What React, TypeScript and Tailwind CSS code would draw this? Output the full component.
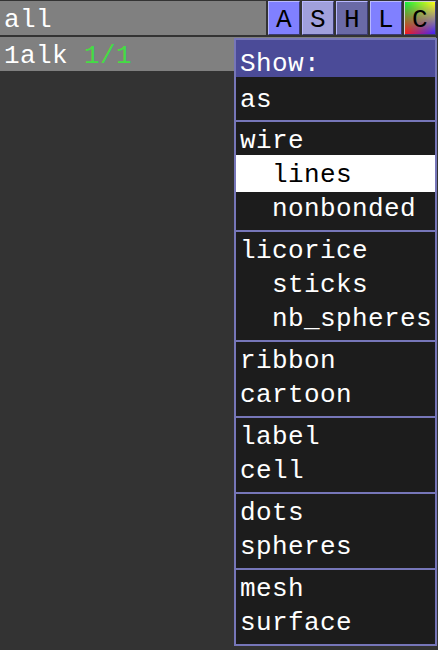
import React from "react";

type Item = { label: string; indent?: boolean; active?: boolean };

const groups: Item[][] = [
  [{ label: "wire" }, { label: "lines", indent: true, active: true }, { label: "nonbonded", indent: true }],
  [{ label: "licorice" }, { label: "sticks", indent: true }, { label: "nb_spheres", indent: true }],
  [{ label: "ribbon" }, { label: "cartoon" }],
  [{ label: "label" }, { label: "cell" }],
  [{ label: "dots" }, { label: "spheres" }],
  [{ label: "mesh" }, { label: "surface" }],
];

function Btn({ letter, bg }: { letter: string; bg: string }) {
  return (
    <div
      className={`${bg} w-[32px] h-[34px] border border-t-[#b8b8ff] border-l-[#b8b8ff] border-r-[#3c3c70] border-b-[#3c3c70] flex justify-center text-black leading-[34px] pt-px`}
    >
      {letter}
    </div>
  );
}

export default function App() {
  return (
    <div className="relative w-[438px] h-[650px] overflow-hidden bg-[#333333] font-['Liberation_Mono',monospace] text-[26px] tracking-[0.4px] text-white">
      {/* TOP ROW */}
      <div className="flex gap-[2px] w-[436px] pt-px">
        <div className="flex-1 h-[34px] bg-[#808080] pl-[4px] pt-[2px] leading-[34px] overflow-hidden">all</div>
        <Btn letter="A" bg="bg-[#8080ff]" />
        <Btn letter="S" bg="bg-[#a0a0dc]" />
        <Btn letter="H" bg="bg-[#6a6aa6]" />
        <Btn letter="L" bg="bg-[#8080ff]" />
        <div className="relative w-[32px] h-[34px] border border-t-[#d0d0d0] border-l-[#d0d0d0] border-r-[#3c3c70] border-b-[#3c3c70] bg-[linear-gradient(to_right,#ff1818,#4020ff)] flex justify-center text-black leading-[34px] pt-px">
          <div className="absolute inset-0 bg-[linear-gradient(to_right,#10f040,#ffff10)] [mask-image:linear-gradient(to_bottom,black,transparent)]" />
          <span className="relative">C</span>
        </div>
      </div>

      {/* OBJECT ROW */}
      <div className="mt-[2px] w-[436px] h-[34px] bg-[#808080] pl-[4px] pt-[2px] leading-[34px] overflow-hidden">
        1alk <span className="text-[#44dd44]">1/1</span>
      </div>

      {/* SHOW MENU */}
      <div className="absolute left-[234px] top-[38px] w-[203px] border-2 border-[#7676b8] bg-[#1c1c1c]">
        <div className="h-[37px] bg-[#4b4b98] pl-[4px] pt-[7px] leading-[34px]">Show:</div>
        <div className="h-[43px] pt-[6px] pl-[4px] leading-[34px]">as</div>
        {groups.map((g, i) => (
          <div key={i} className="border-t-2 border-[#7676b8] pt-[2px] pb-[4px]">
            {g.map((it) =>
              it.active ? (
                <div
                  key={it.label}
                  className="-mt-[3px] h-[37px] pt-[3px] bg-white text-black leading-[34px] pl-[36px]"
                >
                  {it.label}
                </div>
              ) : (
                <div
                  key={it.label}
                  className={`h-[34px] leading-[34px] whitespace-nowrap ${it.indent ? "pl-[36px]" : "pl-[4px]"}`}
                >
                  {it.label}
                </div>
              )
            )}
          </div>
        ))}
      </div>
    </div>
  );
}
